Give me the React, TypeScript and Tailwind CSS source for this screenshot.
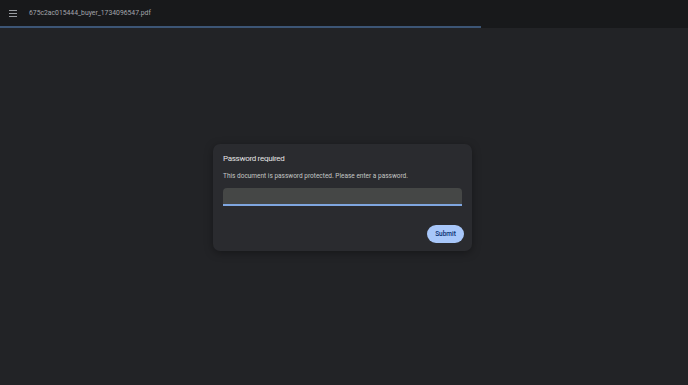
import React from "react";

export default function App() {
  return (
    <div
      className="w-[688px] h-[385px] bg-[#222326] flex flex-col overflow-hidden"
      style={{ fontFamily: "Roboto, 'Open Sans', sans-serif" }}
    >
      <div className="h-[26px] bg-[#18191b] flex items-center shrink-0">
        <div className="w-[29px] flex pl-[9px]">
          <svg width="8" height="7" viewBox="0 0 8 7" fill="none">
            <rect x="0" y="0" width="8" height="1" fill="#9a9da2" />
            <rect x="0" y="3" width="8" height="1" fill="#9a9da2" />
            <rect x="0" y="6" width="8" height="1" fill="#9a9da2" />
          </svg>
        </div>
        <span className="text-[6.8px] text-[#a3a6ab] leading-none">675c2ac015444_buyer_1734096547.pdf</span>
      </div>
      <div className="h-[2px] bg-[#18191b] shrink-0">
        <div className="h-[2px] w-[481px] bg-[#3c5575]" />
      </div>
      <div className="flex-1 flex items-start pl-[213px] pt-[116px]">
        <div className="w-[259px] h-[107px] bg-[#2a2b2f] rounded-[7px] shadow-[0_2px_8px_rgba(0,0,0,0.35)] pt-[9px] px-[10px] flex flex-col">
          <div className="text-[8px] tracking-[-0.3px] text-[#e3e3e3] leading-[12px]">Password required</div>
          <div className="text-[6.5px] text-[#c4c7c5] leading-[10px] mt-[6px]">
            This document is password protected. Please enter a password.
          </div>
          <div className="mt-[7px] h-[18px] w-[239px] bg-[#454746] rounded-t-[4px] border-b-[2px] border-[#7fa6e0]" />
          <div className="flex justify-end mt-[19px]">
            <button className="h-[18px] w-[37px] rounded-full bg-[#a8c7fa] text-[#062e6f] text-[6.5px] font-medium leading-none mr-[-2px]">
              Submit
            </button>
          </div>
        </div>
      </div>
    </div>
  );
}
